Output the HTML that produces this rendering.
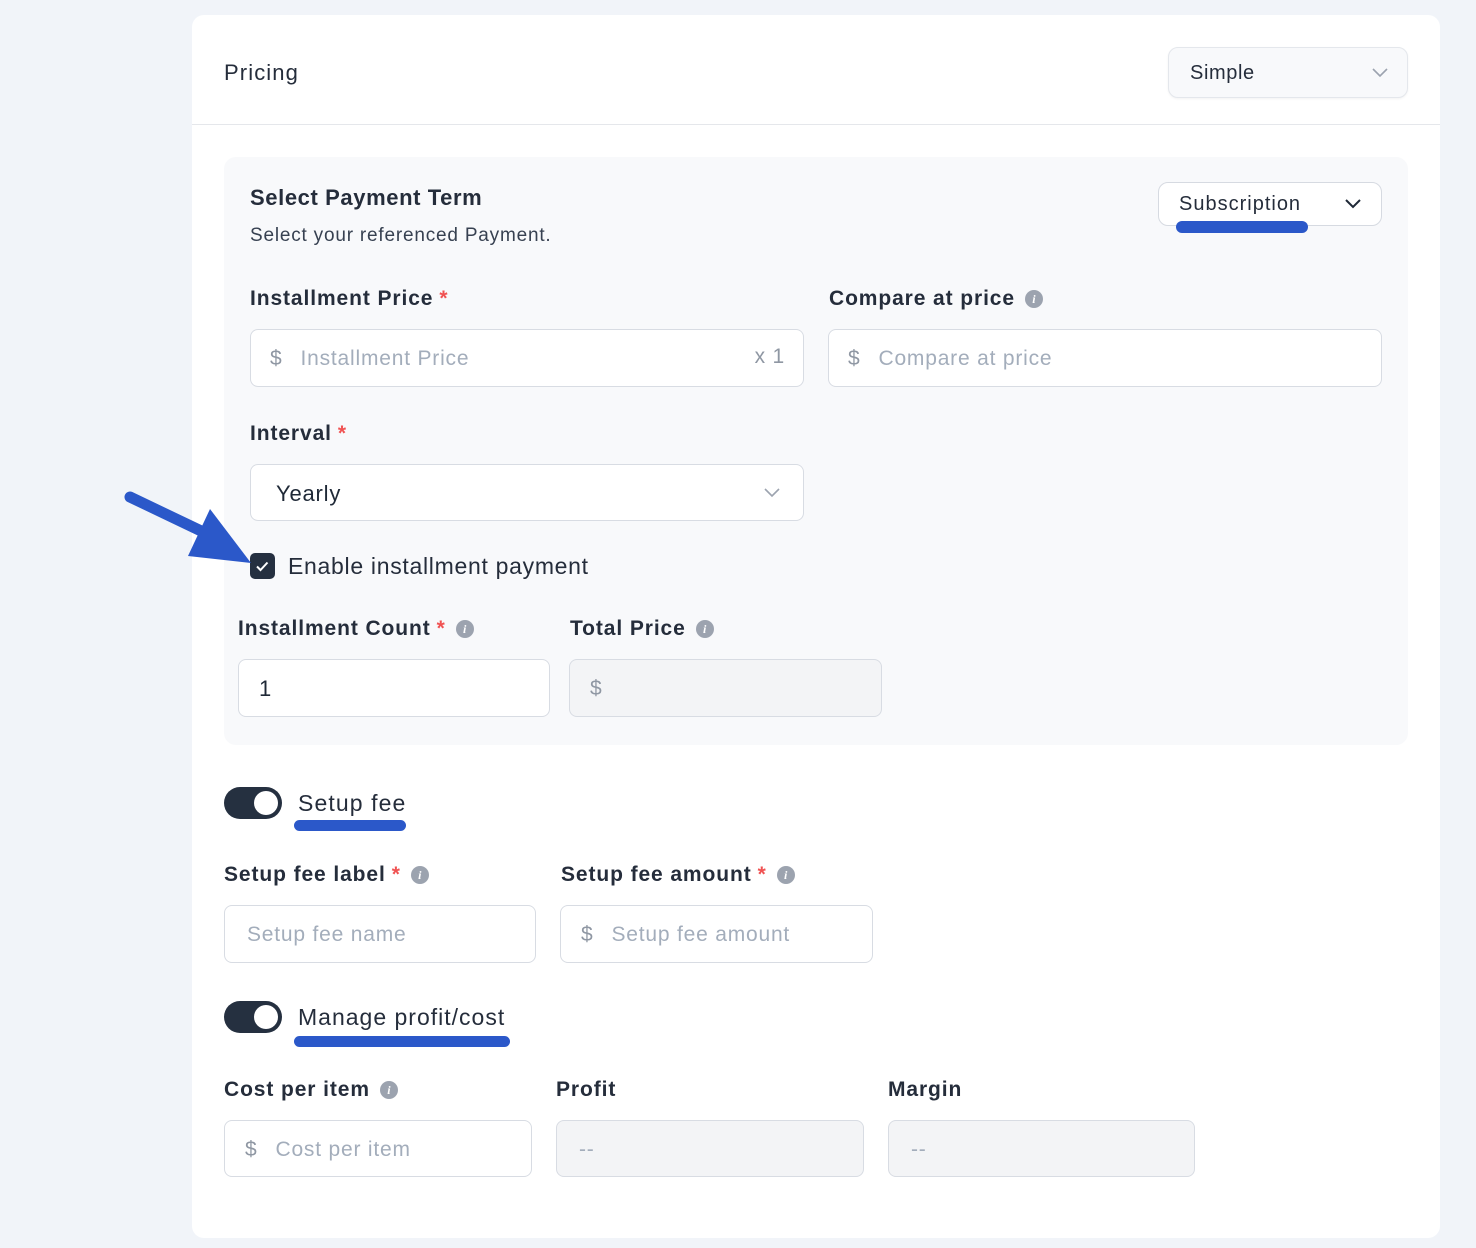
<!DOCTYPE html>
<html><head><meta charset="utf-8"><style>
*{box-sizing:border-box;margin:0;padding:0}
body{width:1476px;height:1248px;background:#f1f4f9;font-family:"Liberation Sans",sans-serif;position:relative;overflow:hidden;color:#1f2937}
.card{position:absolute;left:192px;top:15px;width:1248px;height:1223px;background:#fff;border-radius:12px}
.a{position:absolute}
.lbl{position:absolute;font-size:21px;font-weight:600;color:#252d3b;white-space:nowrap;line-height:26px;letter-spacing:.9px}
.req{color:#f05252;margin-left:6px;font-weight:600}
.info{display:inline-block;width:18px;height:18px;border-radius:50%;background:#9ca3af;color:#fff;font-size:12px;font-weight:700;font-style:italic;text-align:center;line-height:18px;vertical-align:2px;margin-left:10px;font-family:"Liberation Serif",serif;letter-spacing:0}
.inp{position:absolute;background:#fff;border:1px solid #d8dce3;border-radius:8px;font-size:21px;color:#a3adbb;line-height:26px;padding-top:16px;white-space:nowrap;letter-spacing:.8px}
.dis{background:#f3f4f6}
.dol{color:#8f97a3;margin-right:18px}
.ul{position:absolute;height:11px;background:#2b58c9;border-radius:6px}
.tg{position:absolute;width:58px;height:32px;border-radius:16px;background:#253040}
.tg:after{content:"";position:absolute;right:4px;top:4px;width:24px;height:24px;border-radius:50%;background:#fff}
.rg{font-weight:400;font-size:23px;letter-spacing:.7px}
</style></head><body>
<div class="card"></div>
<div class="lbl" style="left:224px;top:60px;font-weight:400;font-size:22px;letter-spacing:1.1px">Pricing</div>
<div class="a" style="left:1168px;top:47px;width:240px;height:51px;background:#f8f9fb;border:1px solid #e4e7ec;border-radius:10px;box-shadow:0 1px 2px rgba(0,0,0,.05)"></div>
<div class="lbl" style="left:1190px;top:60px;font-weight:400;font-size:20px;letter-spacing:.6px">Simple</div>
<svg class="a" style="left:1371px;top:66px" width="18" height="12" viewBox="0 0 18 12"><path d="M2 3l7 7 7-7" fill="none" stroke="#9ca3af" stroke-width="1.6"/></svg>
<div class="a" style="left:192px;top:124px;width:1248px;height:1px;background:#e5e7eb"></div>

<div class="a" style="left:224px;top:157px;width:1184px;height:588px;background:#f8f9fb;border-radius:12px"></div>
<div class="lbl" style="left:250px;top:185px;font-weight:700;font-size:22px;letter-spacing:.6px">Select Payment Term</div>
<div class="lbl" style="left:250px;top:223px;font-weight:400;font-size:19px;color:#374151;letter-spacing:.8px">Select your referenced Payment.</div>
<div class="a" style="left:1158px;top:182px;width:224px;height:44px;background:#fff;border:1px solid #d6dae1;border-radius:10px"></div>
<div class="lbl" style="left:1179px;top:191px;font-weight:400;font-size:20px;letter-spacing:1px">Subscription</div>
<svg class="a" style="left:1344px;top:197px" width="18" height="12" viewBox="0 0 18 12"><path d="M2 3l7 7 7-7" fill="none" stroke="#1f2937" stroke-width="2"/></svg>
<div class="ul" style="left:1176px;top:221px;width:132px;height:12px"></div>

<div class="lbl" style="left:250px;top:286px">Installment Price<span class="req">*</span></div>
<div class="lbl" style="left:829px;top:286px">Compare at price<span class="info">i</span></div>
<div class="inp" style="left:250px;top:329px;width:554px;height:58px;padding-left:19px"><span class="dol">$</span>Installment Price<span style="position:absolute;right:18px;top:14px;color:#8f97a3">x 1</span></div>
<div class="inp" style="left:828px;top:329px;width:554px;height:58px;padding-left:19px"><span class="dol">$</span>Compare at price</div>

<div class="lbl" style="left:250px;top:421px">Interval<span class="req">*</span></div>
<div class="inp" style="left:250px;top:464px;width:554px;height:57px;padding-left:25px;color:#1f2937;font-size:22px">Yearly</div>
<svg class="a" style="left:763px;top:486px" width="18" height="12" viewBox="0 0 18 12"><path d="M2 3l7 7 7-7" fill="none" stroke="#9ca3af" stroke-width="1.6"/></svg>

<div class="a" style="left:250px;top:553px;width:25px;height:26px;background:#253040;border-radius:5px"></div>
<svg class="a" style="left:250px;top:553px" width="25" height="26" viewBox="0 0 25 26"><path d="M7 13.5l3.5 3.5 7-7.5" fill="none" stroke="#fff" stroke-width="2"/></svg>
<div class="lbl rg" style="left:288px;top:553px">Enable installment payment</div>
<svg class="a" style="left:120px;top:485px" width="140" height="80" viewBox="0 0 140 80"><path d="M10 12L100 55" stroke="#2b58c9" stroke-width="11" stroke-linecap="round"/><path d="M90 24L131 78 68 71Z" fill="#2b58c9"/></svg>

<div class="lbl" style="left:238px;top:616px">Installment Count<span class="req">*</span><span class="info">i</span></div>
<div class="lbl" style="left:570px;top:616px">Total Price<span class="info">i</span></div>
<div class="inp" style="left:238px;top:659px;width:312px;height:58px;padding-left:20px;color:#1f2937;font-size:22px">1</div>
<div class="inp dis" style="left:569px;top:659px;width:313px;height:58px;padding-left:20px"><span class="dol">$</span></div>

<div class="tg" style="left:224px;top:787px"></div>
<div class="lbl rg" style="left:298px;top:790px;letter-spacing:1.1px">Setup fee</div>
<div class="ul" style="left:294px;top:820px;width:112px"></div>

<div class="lbl" style="left:224px;top:862px">Setup fee label<span class="req">*</span><span class="info">i</span></div>
<div class="lbl" style="left:561px;top:862px">Setup fee amount<span class="req">*</span><span class="info">i</span></div>
<div class="inp" style="left:224px;top:905px;width:312px;height:58px;padding-left:22px">Setup fee name</div>
<div class="inp" style="left:560px;top:905px;width:313px;height:58px;padding-left:20px"><span class="dol">$</span>Setup fee amount</div>

<div class="tg" style="left:224px;top:1001px"></div>
<div class="lbl rg" style="left:298px;top:1004px;letter-spacing:1px">Manage profit/cost</div>
<div class="ul" style="left:294px;top:1036px;width:216px"></div>

<div class="lbl" style="left:224px;top:1077px">Cost per item<span class="info">i</span></div>
<div class="lbl" style="left:556px;top:1077px">Profit</div>
<div class="lbl" style="left:888px;top:1077px">Margin</div>
<div class="inp" style="left:224px;top:1120px;width:308px;height:57px;padding-left:20px"><span class="dol">$</span>Cost per item</div>
<div class="inp dis" style="left:556px;top:1120px;width:308px;height:57px;padding-left:22px">--</div>
<div class="inp dis" style="left:888px;top:1120px;width:307px;height:57px;padding-left:22px">--</div>
</body></html>
